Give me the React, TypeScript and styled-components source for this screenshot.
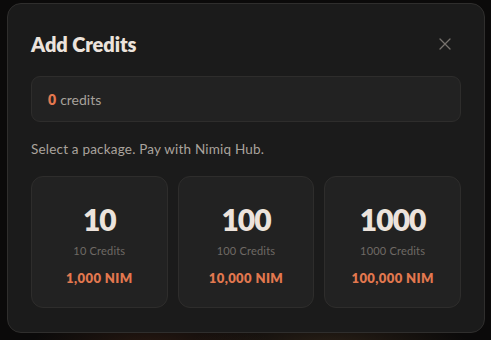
import React from "react";
import styled, { createGlobalStyle } from "styled-components";

const Global = createGlobalStyle`
  html, body { margin: 0; padding: 0; }
  body {
    background: #0b0a0a;
    font-family: "Lato", "Noto Sans", sans-serif;
    -webkit-font-smoothing: antialiased;
  }
`;

const Backdrop = styled.div`
  width: 491px;
  height: 340px;
  box-sizing: border-box;
  padding: 3px 6px 7px 7px;
  background:
    radial-gradient(ellipse 120px 30px at 150px 345px, rgba(90, 50, 30, 0.35), transparent),
    radial-gradient(ellipse 140px 30px at 330px 345px, rgba(110, 80, 50, 0.3), transparent),
    #0b0a0a;
`;

const Modal = styled.div`
  width: 478px;
  height: 330px;
  box-sizing: border-box;
  background: #1b1b1b;
  border: 1px solid #2f2e2d;
  border-radius: 14px;
  padding: 27px 23px 24px 23px;
  display: flex;
  flex-direction: column;
`;

const Header = styled.div`
  display: flex;
  align-items: center;
  justify-content: space-between;
  height: 26px;
`;

const Title = styled.h2`
  margin: 0;
  font-size: 20px;
  font-weight: 800;
  color: #ece3dc;
  line-height: 26px;
  letter-spacing: -0.1px;
`;

const CloseButton = styled.button`
  width: 24px;
  height: 24px;
  margin-right: 4px;
  padding: 0;
  border: none;
  background: transparent;
  display: flex;
  align-items: center;
  justify-content: center;
  color: #77726d;
  cursor: pointer;
`;

const Balance = styled.div`
  margin-top: 19px;
  height: 46px;
  box-sizing: border-box;
  background: #222222;
  border: 1px solid #2e2d2c;
  border-radius: 9px;
  padding: 0 16px;
  display: flex;
  align-items: center;
  font-size: 14px;
  color: #a7a19b;
  gap: 4px;
`;

const BalanceValue = styled.span`
  color: #e2784f;
  font-weight: 800;
`;

const Hint = styled.p`
  margin: 18px 0 0 0;
  font-size: 13.5px;
  line-height: 18px;
  color: #aaa39d;
  letter-spacing: 0.2px;
`;

const Packages = styled.div`
  margin-top: 18px;
  display: grid;
  grid-template-columns: repeat(3, 1fr);
  gap: 10px;
`;

const Card = styled.button`
  height: 132px;
  box-sizing: border-box;
  background: #222222;
  border: 1px solid #2e2d2c;
  border-radius: 12px;
  padding: 24px 0 0 0;
  display: flex;
  flex-direction: column;
  align-items: center;
  font-family: inherit;
  cursor: pointer;
`;

const Amount = styled.div`
  font-size: 30px;
  line-height: 36px;
  font-weight: 800;
  color: #ece3dc;
  letter-spacing: -1px;
`;

const Label = styled.div`
  margin-top: 7px;
  font-size: 11px;
  line-height: 14px;
  color: #6f6a65;
  letter-spacing: 0.2px;
`;

const Price = styled.div`
  margin-top: 12px;
  font-size: 13px;
  line-height: 16px;
  font-weight: 800;
  color: #e2784f;
  letter-spacing: 0.4px;
`;

const packages = [
  { amount: "10", price: "1,000 NIM" },
  { amount: "100", price: "10,000 NIM" },
  { amount: "1000", price: "100,000 NIM" },
];

export default function App() {
  return (
    <>
      <Global />
      <Backdrop>
        <Modal>
          <Header>
            <Title>Add Credits</Title>
            <CloseButton aria-label="Close">
              <svg width="12" height="12" viewBox="0 0 12 12" fill="none">
                <path d="M1 1L11 11M11 1L1 11" stroke="currentColor" strokeWidth="1.3" strokeLinecap="round" />
              </svg>
            </CloseButton>
          </Header>
          <Balance>
            <BalanceValue>0</BalanceValue>
            <span>credits</span>
          </Balance>
          <Hint>Select a package. Pay with Nimiq Hub.</Hint>
          <Packages>
            {packages.map((p) => (
              <Card key={p.amount}>
                <Amount>{p.amount}</Amount>
                <Label>{p.amount} Credits</Label>
                <Price>{p.price}</Price>
              </Card>
            ))}
          </Packages>
        </Modal>
      </Backdrop>
    </>
  );
}
